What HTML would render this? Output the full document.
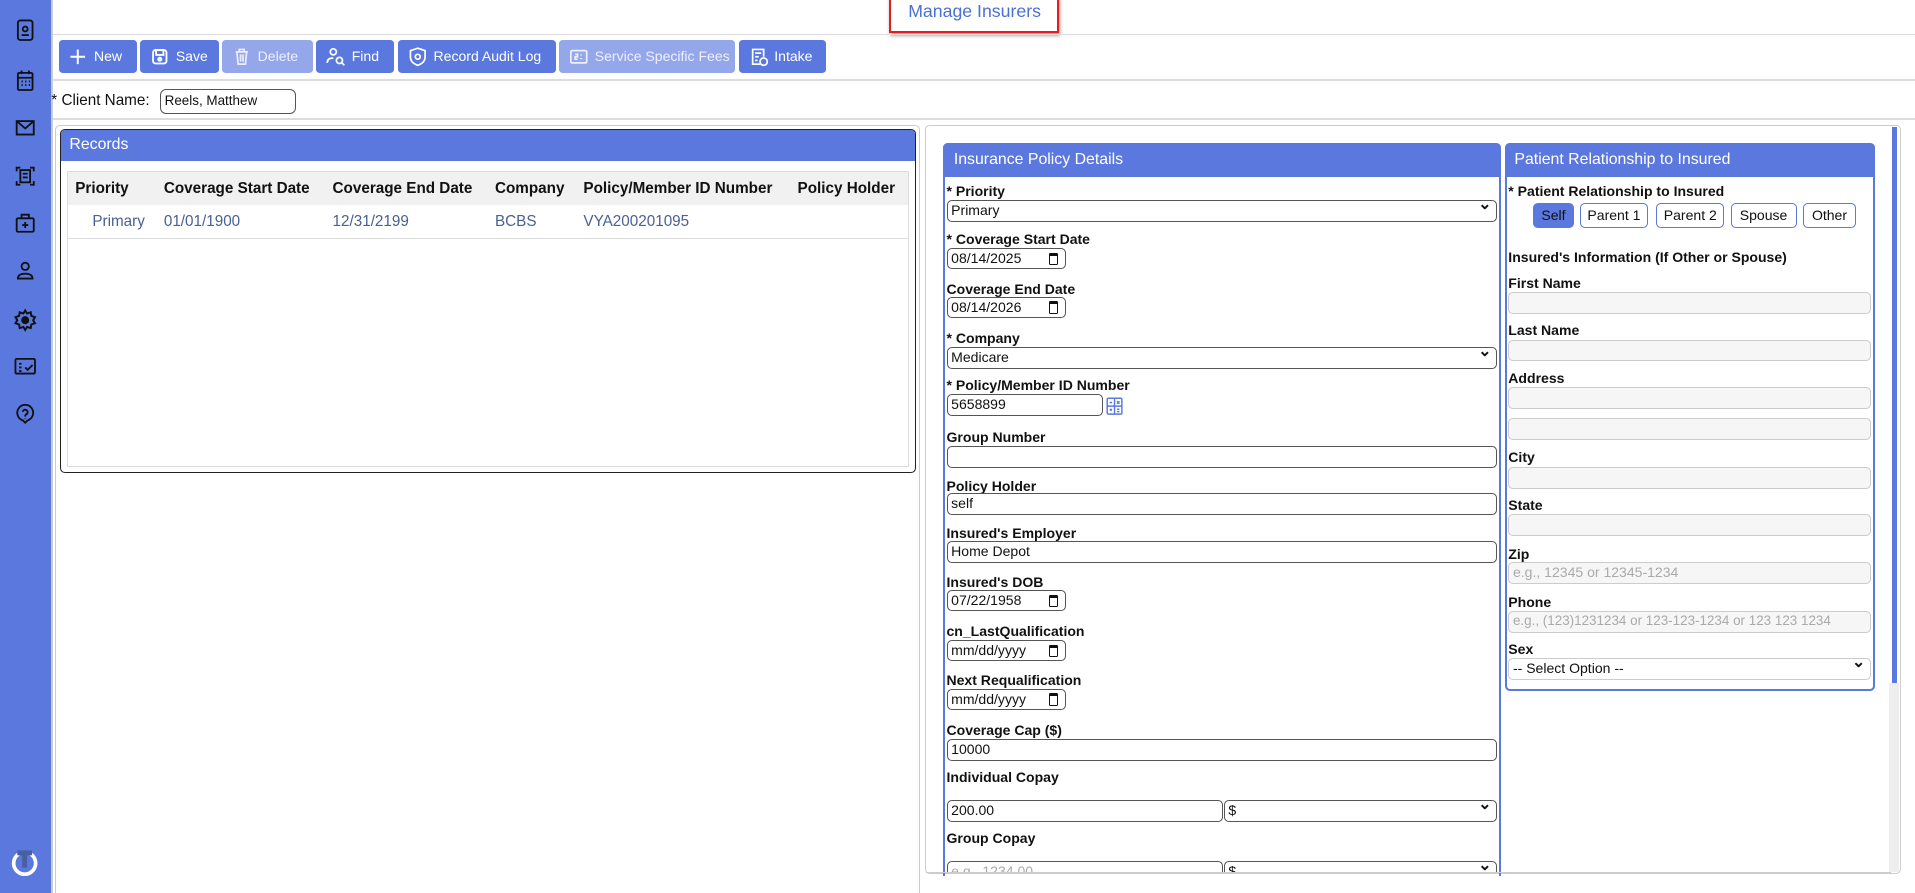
<!DOCTYPE html>
<html><head><meta charset="utf-8">
<style>
html,body{margin:0;padding:0;overflow:hidden;background:#fff;}
#w{zoom:1.2213;width:1568px;height:731px;position:relative;font-family:"Liberation Sans",sans-serif;font-size:12px;color:#111;}
.a{position:absolute;}
.sb{left:0;top:0;width:42px;height:731px;background:#5b78de;}
.ic{position:absolute;left:11px;width:20px;height:20px;}
.hl{position:absolute;height:1px;background:#ddd;}
.btn{position:absolute;top:33px;height:27px;background:#5b78de;color:#fff;border-radius:3px;font-size:11.5px;line-height:27px;box-sizing:border-box;padding-left:8px;display:flex;align-items:center;gap:5px;white-space:nowrap;overflow:hidden;}
.btn.l{background:#93a7ea;color:#eef;}
.btn svg{width:16px;height:16px;flex:none;}
.hdr{background:#5b78de;color:#fff;font-size:13px;}
.lab{position:absolute;font-weight:bold;font-size:11.5px;white-space:nowrap;}
.in{position:absolute;border:1px solid #555;border-radius:4px;height:17px;box-sizing:border-box;font-size:11.5px;line-height:15px;padding-left:3px;background:#fff;white-space:nowrap;overflow:hidden;}
.g{border-color:#ccc;background:#f6f6f6;color:#aaa;}
.sel:after{content:"⌄";position:absolute;right:4px;top:-4px;font-size:13px;font-weight:bold;}
.dt:after{content:"";position:absolute;right:6px;top:3px;width:6px;height:7px;border:1.5px solid #111;border-top-width:3px;border-radius:1px;}
th,td{text-align:left;font-size:12.5px;padding:0 6px;white-space:nowrap;}
</style></head><body><div id="w">
<div class="a sb"></div>
<svg class="ic" style="top:15px" viewBox="0 0 20 20" fill="none" stroke="#111" stroke-width="1.5"><rect x="4" y="2" width="12" height="16" rx="2"/><circle cx="10" cy="9" r="2"/><path d="M7 14h6"/></svg>
<svg class="ic" style="top:56px" viewBox="0 0 20 20" fill="none" stroke="#111" stroke-width="1.5"><rect x="4" y="4" width="12" height="14" rx="1"/><path d="M4 8h12M7 2v3M13 2v3M7 11h1M10 11h1M13 11h1M7 14h1M10 14h1M13 14h1"/></svg>
<svg class="ic" style="top:94px" viewBox="0 0 20 20" fill="none" stroke="#111" stroke-width="1.5"><rect x="3" y="5" width="14" height="11"/><path d="M3 5l7 6 7-6"/></svg>
<svg class="ic" style="top:134px" viewBox="0 0 20 20" fill="none" stroke="#111" stroke-width="1.5"><path d="M3 6V3h3M14 3h3v3M17 14v3h-3M6 17H3v-3"/><rect x="6" y="5" width="8" height="10"/><path d="M8 8h4M8 11h4"/></svg>
<svg class="ic" style="top:173px" viewBox="0 0 20 20" fill="none" stroke="#111" stroke-width="1.5"><rect x="3" y="6" width="14" height="11" rx="1"/><path d="M7 6V3h6v3M10 9v5M7.5 11.5h5"/></svg>
<svg class="ic" style="top:212px" viewBox="0 0 20 20" fill="none" stroke="#111" stroke-width="1.5"><circle cx="10" cy="6" r="3"/><path d="M4 16c0-3 3-4 6-4s6 1 6 4z"/></svg>
<svg class="ic" style="top:252px" viewBox="0 0 20 20" fill="none" stroke="#111" stroke-width="1.6"><circle cx="10" cy="10" r="2.5" fill="#111"/><path d="M10 2l1.5 2.5 3-1 .5 3 3 1-1.5 2.5 1.5 2.5-3 1-.5 3-3-1L10 18l-1.5-2.5-3 1-.5-3-3-1L3.5 10 2 7.5l3-1 .5-3 3 1z"/></svg>
<svg class="ic" style="top:290px" viewBox="0 0 20 20" fill="none" stroke="#111" stroke-width="1.5"><rect x="2" y="4" width="16" height="12" rx="1"/><path d="M5 8h2M5 11h2M5 14h2M10 11l2 2 4-4"/></svg>
<svg class="ic" style="top:329px" viewBox="0 0 20 20" fill="none" stroke="#111" stroke-width="1.5"><path d="M10 17l-2-2a6.5 6.5 0 1 1 4 0z"/><path d="M8 8a2 2 0 1 1 3 2c-1 .6-1 1-1 2M10 13.5v.5"/></svg>
<svg class="a" style="left:8px;top:694px;width:24px;height:24px" viewBox="0 0 24 24"><path d="M7 5a9 9 0 1 0 10 0" fill="none" stroke="#fff" stroke-width="3"/><rect x="6" y="2" width="12" height="4" fill="#4a5fa0"/><rect x="10" y="2" width="4" height="14" fill="#4a5fa0"/></svg>

<div class="a" style="left:42px;top:0;width:1px;height:731px;background:#ccc"></div>
<div class="a" style="left:728px;top:-3px;width:136px;height:27px;border:2px solid #e02020;box-shadow:1px 2px 3px #999;"></div>
<div class="a" style="left:728px;top:1px;width:140px;text-align:center;font-size:14.5px;color:#4a6fd6;">Manage Insurers</div>
<div class="hl" style="left:43px;top:28px;width:1525px"></div>

<div class="btn" style="left:48px;width:64px"><svg viewBox="0 0 16 16" stroke="#fff" stroke-width="1.6"><path d="M8 2v12M2 8h12"/></svg>New</div>
<div class="btn" style="left:115px;width:64px"><svg viewBox="0 0 16 16" fill="none" stroke="#fff" stroke-width="1.5"><rect x="2.5" y="2.5" width="11" height="11" rx="2"/><rect x="5" y="2.5" width="6" height="4"/><circle cx="8" cy="10" r="1.3" fill="#fff"/></svg>Save</div>
<div class="btn l" style="left:182px;width:74px"><svg viewBox="0 0 16 16" fill="none" stroke="#eef" stroke-width="1.4"><path d="M3 4h10M6 4V2h4v2M4 4l1 10h6l1-10M7 6v6M9 6v6"/></svg>Delete</div>
<div class="btn" style="left:259px;width:64px"><svg viewBox="0 0 16 16" fill="none" stroke="#fff" stroke-width="1.4"><circle cx="6" cy="4" r="2.5"/><path d="M1 13c0-3 2-4 5-4"/><circle cx="11" cy="11" r="2.5"/><path d="M13 13l2 2"/></svg>Find</div>
<div class="btn" style="left:326px;width:129px"><svg viewBox="0 0 16 16" fill="none" stroke="#fff" stroke-width="1.4"><path d="M8 1l6 2v5c0 4-3 6-6 7-3-1-6-3-6-7V3z"/><circle cx="8" cy="8" r="2"/></svg>Record Audit Log</div>
<div class="btn l" style="left:458px;width:144px"><svg viewBox="0 0 16 16" fill="none" stroke="#eef" stroke-width="1.4"><rect x="1.5" y="3" width="13" height="10" rx="1"/><path d="M5 6h2v2H5v2h2M10 6v1M10 9v1"/></svg>Service Specific Fees</div>
<div class="btn" style="left:605px;width:71px"><svg viewBox="0 0 16 16" fill="none" stroke="#fff" stroke-width="1.4"><path d="M9 14H3V2h9v6M5 5h5M5 8h3M5 11h2"/><circle cx="12" cy="12" r="3"/></svg>Intake</div>
<div class="hl" style="left:43px;top:65px;width:1525px"></div>

<div class="a" style="left:42px;top:75px;font-size:12.5px">* Client Name:</div>
<div class="in" style="left:131px;top:73px;width:111px;height:20px;line-height:18px;font-size:11px;border-radius:5px">Reels, Matthew</div>
<div class="hl" style="left:43px;top:97px;width:1525px"></div>

<div class="a" style="left:45px;top:102px;width:707px;height:640px;border:1px solid #ccc;border-radius:4px"></div>
<div class="a" style="left:49px;top:106px;width:699px;height:280px;border:1px solid #222;border-radius:4px;overflow:hidden">
 <div class="hdr" style="height:25px;line-height:25px;padding-left:7px">Records</div>
 <div class="a" style="left:5px;top:33px;width:688px;height:241px;border:1px solid #ddd">
 <table style="border-collapse:collapse;width:100%">
 <tr style="background:#f1f1f1;height:27px;font-weight:bold"><th>Priority</th><th>Coverage Start Date</th><th>Coverage End Date</th><th>Company</th><th>Policy/Member ID Number</th><th>Policy Holder</th></tr>
 <tr style="height:28px;color:#4a5f95;border-bottom:1px solid #ddd"><td style="padding-left:20px">Primary</td><td>01/01/1900</td><td>12/31/2199</td><td>BCBS</td><td>VYA200201095</td><td></td></tr>
 </table></div>
</div>

<div class="a" style="left:757px;top:102px;width:798px;height:612px;border:1px solid #ccc;border-radius:4px"></div>
<div class="a" style="left:1549px;top:104px;width:4px;height:455px;background:#5b78de"></div>
<div class="a" style="left:1547px;top:559px;width:8px;height:155px;background:#eee"></div>

<div class="a" style="left:772px;top:117px;width:457px;height:600px;border:2px solid #5b78de;border-bottom:none;border-radius:4px 4px 0 0;box-sizing:border-box"></div>
<div class="a hdr" style="left:772px;top:117px;width:457px;height:28px;line-height:28px;padding-left:9px;box-sizing:border-box;border-radius:4px 4px 0 0">Insurance Policy Details</div>
<div class="lab" style="left:775px;top:150px">* Priority</div>
<div class="in sel" style="left:775px;top:164px;width:451px;height:18px">Primary</div>
<div class="lab" style="left:775px;top:189px">* Coverage Start Date</div>
<div class="in dt" style="left:775px;top:203px;width:98px;height:17px">08/14/2025</div>
<div class="lab" style="left:775px;top:230px">Coverage End Date</div>
<div class="in dt" style="left:775px;top:243px;width:98px;height:17px">08/14/2026</div>
<div class="lab" style="left:775px;top:270px">* Company</div>
<div class="in sel" style="left:775px;top:284px;width:451px;height:18px">Medicare</div>
<div class="lab" style="left:775px;top:309px">* Policy/Member ID Number</div>
<div class="in" style="left:775px;top:323px;width:128px;height:18px">5658899</div>
<svg class="a" style="left:906px;top:325px;width:14px;height:15px" viewBox="0 0 14 15" fill="none" stroke="#5b78de" stroke-width="1.2"><rect x="1" y="1" width="12" height="13" rx="1"/><path d="M7 1v13M1 7.5h12M3 4.5h2M9 3.5l2 2M11 3.5l-2 2M3 10.5h2M4 9.5v2M9 10h2M9 12h2"/></svg>
<div class="lab" style="left:775px;top:351px">Group Number</div>
<div class="in" style="left:775px;top:365px;width:451px;height:18px"></div>
<div class="lab" style="left:775px;top:391px">Policy Holder</div>
<div class="in" style="left:775px;top:404px;width:451px;height:18px">self</div>
<div class="lab" style="left:775px;top:430px">Insured's Employer</div>
<div class="in" style="left:775px;top:443px;width:451px;height:18px">Home Depot</div>
<div class="lab" style="left:775px;top:470px">Insured's DOB</div>
<div class="in dt" style="left:775px;top:483px;width:98px;height:17px">07/22/1958</div>
<div class="lab" style="left:775px;top:510px">cn_LastQualification</div>
<div class="in dt" style="left:775px;top:524px;width:98px;height:17px">mm/dd/yyyy</div>
<div class="lab" style="left:775px;top:550px">Next Requalification</div>
<div class="in dt" style="left:775px;top:564px;width:98px;height:17px">mm/dd/yyyy</div>
<div class="lab" style="left:775px;top:591px">Coverage Cap ($)</div>
<div class="in" style="left:775px;top:605px;width:451px;height:18px">10000</div>
<div class="lab" style="left:775px;top:630px">Individual Copay</div>
<div class="in" style="left:775px;top:655px;width:226px;height:18px">200.00</div>
<div class="in sel" style="left:1002px;top:655px;width:224px;height:18px">$</div>
<div class="lab" style="left:775px;top:680px">Group Copay</div>
<div class="a" style="left:773px;top:704px;width:455px;height:10px;overflow:hidden">
<div class="in g" style="left:2px;top:1px;width:226px;height:18px;background:#fff;border-color:#555">e.g., 1234.00</div>
<div class="in sel" style="left:229px;top:1px;width:224px;height:18px">$</div></div>
<div class="a" style="left:758px;top:714px;width:790px;height:1px;background:#ccc"></div>

<div class="a" style="left:1232px;top:117px;width:303px;height:449px;border:2px solid #5b78de;border-radius:4px;box-sizing:border-box"></div>
<div class="a hdr" style="left:1232px;top:117px;width:303px;height:28px;line-height:28px;padding-left:8px;box-sizing:border-box;border-radius:4px 4px 0 0">Patient Relationship to Insured</div>
<div class="lab" style="left:1235px;top:150px">* Patient Relationship to Insured</div>
<div class="a" style="left:1255px;top:166px;width:34px;height:21px;background:#5b78de;border-radius:4px;font-size:11.5px;line-height:21px;text-align:center;color:#111">Self</div>
<div class="a" style="left:1294px;top:166px;width:55px;height:21px;border:1px solid #5b78de;border-radius:4px;box-sizing:border-box;font-size:11.5px;line-height:19px;text-align:center">Parent 1</div>
<div class="a" style="left:1356px;top:166px;width:56px;height:21px;border:1px solid #5b78de;border-radius:4px;box-sizing:border-box;font-size:11.5px;line-height:19px;text-align:center">Parent 2</div>
<div class="a" style="left:1417px;top:166px;width:54px;height:21px;border:1px solid #5b78de;border-radius:4px;box-sizing:border-box;font-size:11.5px;line-height:19px;text-align:center">Spouse</div>
<div class="a" style="left:1476px;top:166px;width:44px;height:21px;border:1px solid #5b78de;border-radius:4px;box-sizing:border-box;font-size:11.5px;line-height:19px;text-align:center">Other</div>
<div class="lab" style="left:1235px;top:204px">Insured's Information (If Other or Spouse)</div>
<div class="lab" style="left:1235px;top:225px">First Name</div>
<div class="in g" style="left:1235px;top:239px;width:297px;height:18px"></div>
<div class="lab" style="left:1235px;top:264px">Last Name</div>
<div class="in g" style="left:1235px;top:278px;width:297px;height:18px"></div>
<div class="lab" style="left:1235px;top:303px">Address</div>
<div class="in g" style="left:1235px;top:317px;width:297px;height:18px"></div>
<div class="in g" style="left:1235px;top:342px;width:297px;height:18px"></div>
<div class="lab" style="left:1235px;top:368px">City</div>
<div class="in g" style="left:1235px;top:382px;width:297px;height:18px"></div>
<div class="lab" style="left:1235px;top:407px">State</div>
<div class="in g" style="left:1235px;top:421px;width:297px;height:18px"></div>
<div class="lab" style="left:1235px;top:447px">Zip</div>
<div class="in g" style="left:1235px;top:460px;width:297px;height:18px">e.g., 12345 or 12345-1234</div>
<div class="lab" style="left:1235px;top:486px">Phone</div>
<div class="in g" style="left:1235px;top:500px;width:297px;height:18px;font-size:11px">e.g., (123)1231234 or 123-123-1234 or 123 123 1234</div>
<div class="lab" style="left:1235px;top:525px">Sex</div>
<div class="in sel" style="left:1235px;top:539px;width:297px;height:18px;border-color:#ccc">-- Select Option --</div>
</div></body></html>
